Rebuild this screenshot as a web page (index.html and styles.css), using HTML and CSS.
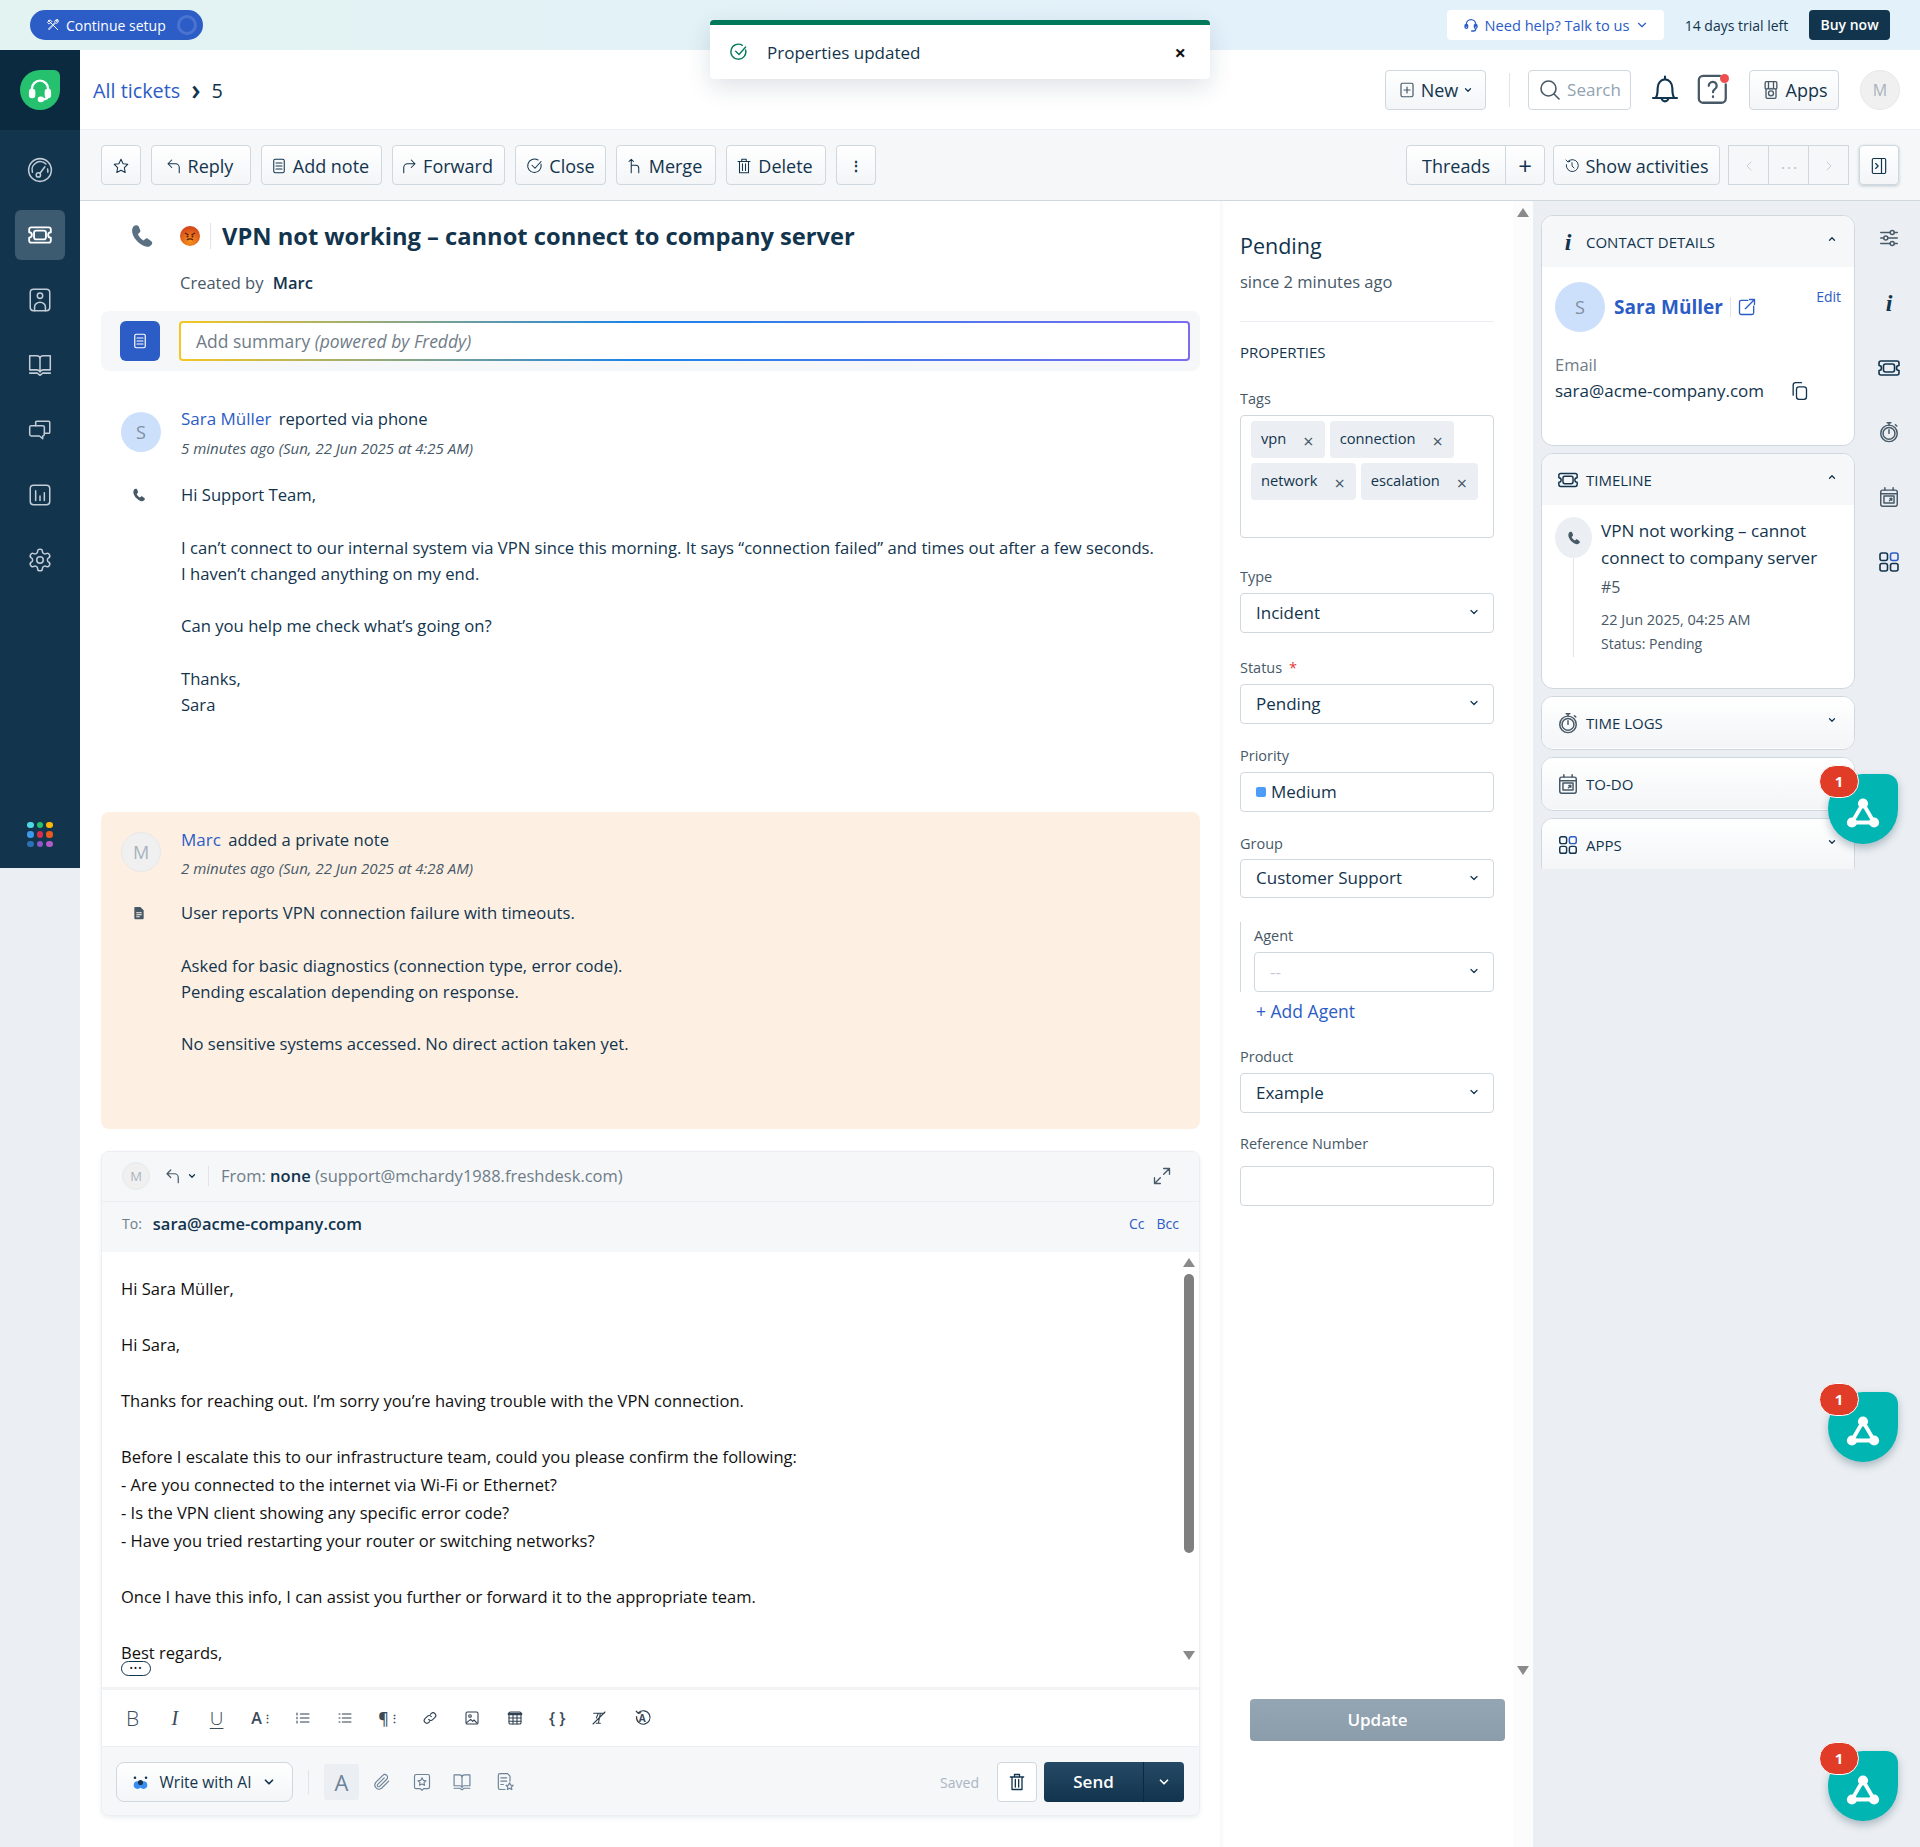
FILE: index.html
```html
<!DOCTYPE html>
<html lang="en">
<head>
    <meta charset="UTF-8">
    <meta name="viewport" content="width=device-width, initial-scale=1.0">
    <title>VPN not working - cannot connect to company server</title>
    <link rel="stylesheet" href="styles.css">
</head>
<body>
    <svg class="sprite" xmlns="http://www.w3.org/2000/svg">
        <symbol id="i-gauge" viewBox="0 0 24 24"><circle cx="12" cy="12" r="10.500"/><path d="M5 14a7.500 7.500 0 0 1 12.500-7.500M19 11a7 7 0 0 1 .2 3M12 15l4.500-6"/><circle cx="10.500" cy="16.500" r="2"/></symbol>
        <symbol id="i-ticket" viewBox="0 0 24 24"><path d="M2 7a2 2 0 0 1 2-2h16a2 2 0 0 1 2 2v2.5a2.5 2.5 0 0 0 0 5V17a2 2 0 0 1-2 2H4a2 2 0 0 1-2-2v-2.500a2.500 2.500 0 0 0 0-5z"/><rect x="6.500" y="8" width="11" height="8" rx="2"/></symbol>
        <symbol id="i-contact" viewBox="0 0 24 24"><rect x="3" y="2" width="18" height="20" rx="3"/><circle cx="12" cy="8" r="2.500"/><path d="M7 22v-3.500a5 4.500 0 0 1 10 0V22"/></symbol>
        <symbol id="i-book" viewBox="0 0 24 24"><path d="M2.500 3.500H9a3 3 0 0 1 3 3v12a3 3 0 0 0-3-2H2.500zM21.500 3.500H15a3 3 0 0 0-3 3v12a3 3 0 0 1 3-2h6.500zM2.500 19.500H9.500L12 21.500l2.500-2h7"/></symbol>
        <symbol id="i-chat" viewBox="0 0 24 24"><path d="M8 8V5a1 1 0 0 1 1-1h11a1 1 0 0 1 1 1v9a1 1 0 0 1-1 1h-4"/><path d="M4 8h10.500a1.500 1.500 0 0 1 1.500 1.500V16a1.500 1.500 0 0 1-1.500 1.500V20l-3-2.500H4A1.500 1.500 0 0 1 2.500 16V9.500A1.500 1.500 0 0 1 4 8z"/></symbol>
        <symbol id="i-chart" viewBox="0 0 24 24"><rect x="3" y="3" width="18" height="18" rx="3"/><path d="M8 8v9M12 13v4M16 10v7"/></symbol>
        <symbol id="i-gear" viewBox="0 0 24 24"><path d="M12.220 2h-.44a2 2 0 0 0-2 2v.18a2 2 0 0 1-1 1.730l-.43.25a2 2 0 0 1-2 0l-.15-.08a2 2 0 0 0-2.730.73l-.22.38a2 2 0 0 0 .73 2.730l.15.1a2 2 0 0 1 1 1.720v.51a2 2 0 0 1-1 1.740l-.15.09a2 2 0 0 0-.73 2.730l.22.38a2 2 0 0 0 2.730.73l.15-.08a2 2 0 0 1 2 0l.43.25a2 2 0 0 1 1 1.730V20a2 2 0 0 0 2 2h.44a2 2 0 0 0 2-2v-.18a2 2 0 0 1 1-1.730l.43-.25a2 2 0 0 1 2 0l.15.08a2 2 0 0 0 2.730-.73l.22-.39a2 2 0 0 0-.73-2.730l-.15-.08a2 2 0 0 1-1-1.740v-.5a2 2 0 0 1 1-1.740l.15-.09a2 2 0 0 0 .73-2.730l-.22-.38a2 2 0 0 0-2.730-.73l-.15.08a2 2 0 0 1-2 0l-.43-.25a2 2 0 0 1-1-1.730V4a2 2 0 0 0-2-2z"/><circle cx="12" cy="12" r="3"/></symbol>
        <symbol id="i-star" viewBox="0 0 24 24"><path d="M12 3l2.800 5.900 6.200.9-4.500 4.500 1.100 6.400-5.600-3-5.600 3 1.100-6.400L3 9.800l6.200-.9z"/></symbol>
        <symbol id="i-reply" viewBox="0 0 24 24"><path d="M9 4L4 9l5 5M4 9h10a5 5 0 0 1 5 5v7"/></symbol>
        <symbol id="i-forward" viewBox="0 0 24 24"><path d="M15 4l5 5-5 5M20 9H10a5 5 0 0 0-5 5v7"/></symbol>
        <symbol id="i-note" viewBox="0 0 24 24"><rect x="5" y="3" width="14" height="18" rx="2"/><path d="M8 8h8M8 12h8M8 16h8"/></symbol>
        <symbol id="i-check" viewBox="0 0 24 24"><path d="M20 9.500A9 9 0 1 1 16 4"/><path d="M8 11l4 4 8-9"/></symbol>
        <symbol id="i-merge" viewBox="0 0 24 24"><path d="M7 3v18M4 6l3-3 3 3M7 11h6a4 4 0 0 1 4 4v6"/></symbol>
        <symbol id="i-trash" viewBox="0 0 24 24"><path d="M4 6h16M9 6V3h6v3M6 6v15h12V6M10 9v9M14 9v9"/></symbol>
        <symbol id="i-plus-box" viewBox="0 0 24 24"><rect x="4" y="3" width="16" height="18" rx="2"/><path d="M8 12h8M12 8v8"/></symbol>
        <symbol id="i-chevron" viewBox="0 0 24 24"><path d="M6 9l6 6 6-6"/></symbol>
        <symbol id="i-search" viewBox="0 0 24 24"><circle cx="10.500" cy="10.500" r="7.500"/><path d="M16 16l5 5"/></symbol>
        <symbol id="i-bell" viewBox="0 0 24 24"><path d="M12 2v2M5 18c1.500-2 1.500-4 1.500-7.500C6.500 7 9 4 12 4s5.500 3 5.500 6.500c0 3.500 0 5.500 1.500 7.500zM3 18h18M9.500 18a2.500 2.500 0 0 0 5 0"/></symbol>
        <symbol id="i-bubble-q" viewBox="0 0 24 24"><path d="M17 2H5a3 3 0 0 0-3 3v13a3 3 0 0 0 3 3h13a3 3 0 0 0 3-3V8"/><path d="M9 9a2.800 2.800 0 1 1 4.300 2.400c-.9.6-1.300 1.100-1.300 2.100M12 16.500v.5"/></symbol>
        <symbol id="i-store" viewBox="0 0 24 24"><path d="M5 10V3.500A1.500 1.500 0 0 1 6.500 2h11A1.500 1.500 0 0 1 19 3.500V10a2.300 2.300 0 0 1-3.500 0 2.300 2.300 0 0 1-3.500 0 2.300 2.300 0 0 1-3.500 0A2.300 2.300 0 0 1 5 10zM6 11v9.500A1.500 1.500 0 0 0 7.500 22h9a1.500 1.500 0 0 0 1.500-1.500V11M9 2v8M15 2v8"/><circle cx="12" cy="16" r="3"/></symbol>
        <symbol id="i-history" viewBox="0 0 24 24"><path d="M6 5a9 9 0 1 1-2.500 5M3 3l3 3 3-1M12 7v5l3 3"/></symbol>
        <symbol id="i-panel" viewBox="0 0 24 24"><rect x="4" y="3" width="16" height="18" rx="1.500"/><path d="M15 3v18M8 9l3 3-3 3"/></symbol>
        <symbol id="i-sliders" viewBox="0 0 24 24"><path d="M3 6h10M18 6h3M3 12h3M11 12h10M3 18h10M18 18h3"/><circle cx="15.500" cy="6" r="2.200"/><circle cx="8.500" cy="12" r="2.200"/><circle cx="15.500" cy="18" r="2.200"/></symbol>
        <symbol id="i-external" viewBox="0 0 24 24"><path d="M13 4H5a2 2 0 0 0-2 2v13a2 2 0 0 0 2 2h13a2 2 0 0 0 2-2v-8M10 14L21 3M15 3h6v6"/></symbol>
        <symbol id="i-copy" viewBox="0 0 24 24"><rect x="9" y="7" width="12" height="15" rx="3"/><path d="M5 17V5a3 3 0 0 1 3-3h7"/></symbol>
        <symbol id="i-timer" viewBox="0 0 24 24"><circle cx="12" cy="13.500" r="9"/><circle cx="12" cy="13.500" r="6.500"/><path d="M12 9.500v4M10 2h4M12 2v2.500M19 4l1.500 1.500"/></symbol>
        <symbol id="i-calendar" viewBox="0 0 24 24"><rect x="3" y="4.500" width="18" height="17.500" rx="2"/><path d="M7.500 2v2.500M16.500 2v2.500M3 8.500h18"/><rect x="6.500" y="11" width="11" height="7.500"/><path d="M12.500 16l2.500-2.500M13 13.500h2v2"/></symbol>
        <symbol id="i-grid" viewBox="0 0 24 24"><rect x="3" y="3" width="7.500" height="7.500" rx="2"/><rect x="13.500" y="3" width="7.500" height="7.500" rx="2" class="tile-blue"/><rect x="3" y="13.500" width="7.500" height="7.500" rx="2"/><rect x="13.500" y="13.500" width="7.500" height="7.500" rx="2"/></symbol>
        <symbol id="i-phone" viewBox="0 0 24 24"><path class="solid" d="M5 3.500C6 2.600 8 2.400 9 3.500l1.500 3.500c.3.8 0 1.600-.6 2.100L8.500 10.500c.8 2 2.700 4.200 4.800 5.300l1.500-1.300c.7-.6 1.500-.6 2.200-.2l3 2.200c.9.7 1.100 2 .2 3-1 1.200-2.400 2-4 1.700C9.500 20 3.500 13 3.500 7.500c0-1.500.6-3 1.500-4z"/></symbol>
        <symbol id="i-doc" viewBox="0 0 24 24"><path class="solid" d="M6 3h8l5 5v12a1.500 1.500 0 0 1-1.500 1.500h-11A1.500 1.500 0 0 1 5 20V4.500A1.500 1.500 0 0 1 6 3z"/><path class="cut" d="M8.500 11.500h7M8.500 14.500h7M8.500 17.500h4"/></symbol>
        <symbol id="i-link" viewBox="0 0 24 24"><path d="M10 14a4 4 0 0 0 6 .5l3.500-3.500a4 4 0 0 0-5.700-5.700l-1.300 1.300M14 10a4 4 0 0 0-6-.5L4.500 13a4 4 0 0 0 5.700 5.700l1.300-1.300"/></symbol>
        <symbol id="i-image" viewBox="0 0 24 24"><rect x="3" y="3" width="18" height="18" rx="2"/><circle cx="9" cy="9" r="2"/><path d="M4 19l6-5 3 3 2-2 5 5"/></symbol>
        <symbol id="i-table" viewBox="0 0 24 24"><rect x="3" y="3" width="18" height="18" rx="2"/><path class="bar" d="M3 6h18"/><path d="M3 12h18M3 17h18M9 8v13M15 8v13"/></symbol>
        <symbol id="i-ol" viewBox="0 0 24 24"><path d="M8 6h13M8 12h13M8 18h13M3 4.500v3M3 11v2M3 16.500v3"/></symbol>
        <symbol id="i-ul" viewBox="0 0 24 24"><path d="M8 6h13M8 12h13M8 18h13M3 6h1.500M3 12h1.500M3 18h1.500"/></symbol>
        <symbol id="i-clear" viewBox="0 0 24 24"><path d="M4 5h16M14 5l-3 15M11 5L8 12M3 21L21 3M8 20h6"/></symbol>
        <symbol id="i-clip" viewBox="0 0 24 24"><path d="M20 11l-8.500 8.500a5 5 0 0 1-7-7L13 4a3.300 3.300 0 0 1 4.700 4.700l-8.500 8.500a1.600 1.600 0 0 1-2.300-2.300l7.800-7.800"/></symbol>
        <symbol id="i-canned" viewBox="0 0 24 24"><path d="M5 3h14a2 2 0 0 1 2 2v13a2 2 0 0 1-2 2h-5l-2 2-2-2H5a2 2 0 0 1-2-2V5a2 2 0 0 1 2-2z"/><path d="M12 7l1.500 3 3.300.5-2.400 2.300.6 3.200-3-1.500-3 1.500.6-3.200-2.400-2.300 3.300-.5z"/></symbol>
        <symbol id="i-form" viewBox="0 0 24 24"><path d="M12 21H6a2 2 0 0 1-2-2V4a2 2 0 0 1 2-2h9l3 3v6M7 7h7M7 11h7M7 15h3"/><path d="M17.500 13l1.300 2.700 3 .4-2.200 2 .6 3-2.700-1.500-2.700 1.500.6-3-2.200-2 3-.4z"/></symbol>
        <symbol id="i-network" viewBox="0 0 24 24"><path class="net" d="M12 6L5 18h14z"/><circle class="solid" cx="12" cy="6" r="3.200"/><circle class="solid" cx="5" cy="18" r="3.200"/><circle class="solid" cx="19" cy="18" r="3.200"/></symbol>
    </svg>

    <div class="topbar">
        <a class="setup-pill">
            <svg class="ico ico-14" viewBox="0 0 24 24"><path d="M4 4l16 16M3 7l4-4 3 3-4 4zM20 3a4 4 0 0 0-5 5L4 19l1 1L16 9a4 4 0 0 0 5-5l-2.500 2.500L17 5z"/></svg>
            Continue setup
            <span class="setup-ring"></span>
        </a>
        <div class="topbar-right">
            <a class="help-link">
                <svg class="ico ico-16" viewBox="0 0 24 24"><path d="M5 14v-3a7 7 0 0 1 14 0v3M5 11a2 2 0 0 0-2 2v2a2 2 0 0 0 4 0v-2a2 2 0 0 0-2-2zM19 11a2 2 0 0 1 2 2v2a2 2 0 0 1-4 0v-2a2 2 0 0 1 2-2zM19 17v1a3 3 0 0 1-3 3h-3"/></svg>
                Need help? Talk to us
                <svg class="ico ico-14"><use href="#i-chevron"/></svg>
            </a>
            <span class="trial">14 days trial left</span>
            <a class="buy-btn">Buy now</a>
        </div>
    </div>

    <div class="app">
        <nav class="nav">
            <div class="nav-logo">
                <div class="logo-mark">
                    <svg class="ico logo-head" viewBox="0 0 24 24"><path d="M5 15v-4a7 7 0 0 1 14 0v4M19 16c0 3-2 4-5 4"/><rect x="3.500" y="12" width="3.500" height="6" rx="1.500" class="logo-ear"/><rect x="17" y="12" width="3.500" height="6" rx="1.500" class="logo-ear"/><rect x="11" y="18.500" width="3.500" height="3" rx="1.500" class="logo-ear"/></svg>
                </div>
            </div>
            <ul class="nav-list">
                <li class="nav-item"><svg class="ico ico-26"><use href="#i-gauge"/></svg></li>
                <li class="nav-item is-active"><svg class="ico ico-26"><use href="#i-ticket"/></svg></li>
                <li class="nav-item"><svg class="ico ico-26"><use href="#i-contact"/></svg></li>
                <li class="nav-item"><svg class="ico ico-26"><use href="#i-book"/></svg></li>
                <li class="nav-item"><svg class="ico ico-26"><use href="#i-chat"/></svg></li>
                <li class="nav-item"><svg class="ico ico-26"><use href="#i-chart"/></svg></li>
                <li class="nav-item"><svg class="ico ico-26"><use href="#i-gear"/></svg></li>
            </ul>
            <div class="nav-dots">
                <i class="dot d1"></i><i class="dot d2"></i><i class="dot d3"></i>
                <i class="dot d4"></i><i class="dot d5"></i><i class="dot d6"></i>
                <i class="dot d7"></i><i class="dot d8"></i><i class="dot d9"></i>
            </div>
        </nav>

        <div class="content">
            <header class="header">
                <div class="crumbs"><a class="link">All tickets</a><span class="crumb-sep">&rsaquo;</span><span>5</span></div>
                <div class="header-tools">
                    <a class="btn btn-new"><svg class="ico ico-18"><use href="#i-plus-box"/></svg>New<svg class="ico ico-10 ico-bold"><use href="#i-chevron"/></svg></a>
                    <span class="v-rule"></span>
                    <a class="btn btn-search"><svg class="ico ico-24"><use href="#i-search"/></svg><span class="muted">Search</span></a>
                    <svg class="ico tool-bell"><use href="#i-bell"/></svg>
                    <span class="help-wrap"><svg class="ico help-q"><use href="#i-bubble-q"/></svg><i class="red-dot"></i></span>
                    <a class="btn btn-apps"><svg class="ico ico-20"><use href="#i-store"/></svg>Apps</a>
                    <span class="avatar avatar-grey">M</span>
                </div>
            </header>

            <div class="toolbar">
                <a class="btn btn-icon"><svg class="ico ico-18"><use href="#i-star"/></svg></a>
                <a class="btn btn-w100 btn-left"><svg class="ico ico-18"><use href="#i-reply"/></svg>Reply</a>
                <a class="btn btn-w121 btn-left"><svg class="ico ico-18"><use href="#i-note"/></svg>Add note</a>
                <a class="btn btn-w113 btn-left"><svg class="ico ico-18"><use href="#i-forward"/></svg>Forward</a>
                <a class="btn btn-w91"><svg class="ico ico-18"><use href="#i-check"/></svg>Close</a>
                <a class="btn btn-w100 btn-left"><svg class="ico ico-18"><use href="#i-merge"/></svg>Merge</a>
                <a class="btn btn-w100 btn-left"><svg class="ico ico-18"><use href="#i-trash"/></svg>Delete</a>
                <a class="btn btn-icon kebab">&#8942;</a>
                <div class="toolbar-right">
                    <div class="btn-group threads-group">
                        <a class="btn btn-threads">Threads</a>
                        <a class="btn btn-plus">+</a>
                    </div>
                    <a class="btn btn-activities"><svg class="ico ico-16"><use href="#i-history"/></svg>Show activities</a>
                    <div class="btn-group pager">
                        <a class="btn btn-page"><svg class="ico ico-16 rot90"><use href="#i-chevron"/></svg></a>
                        <a class="btn btn-page">&#8943;</a>
                        <a class="btn btn-page"><svg class="ico ico-16 rot-90"><use href="#i-chevron"/></svg></a>
                    </div>
                    <a class="btn btn-icon btn-panel"><svg class="ico ico-20"><use href="#i-panel"/></svg></a>
                </div>
            </div>

            <div class="columns">
                <main class="ticket">
                    <div class="ticket-title">
                        <svg class="ico title-phone"><use href="#i-phone"/></svg>
                        <svg class="emoji" viewBox="0 0 20 20">
                            <defs><radialGradient id="angry" cx="50%" cy="75%" r="75%"><stop offset="0" stop-color="#f7941d"/><stop offset="1" stop-color="#d2401a"/></radialGradient></defs>
                            <circle cx="10" cy="10" r="10" fill="url(#angry)"/>
                            <path d="M5 7l3.500 2M15 7l-3.500 2M7 14c1.500-1.500 4.500-1.500 6 0" fill="none" stroke="#5b1c0a" stroke-width="1.400"/>
                            <circle cx="7.500" cy="10.500" r="1" fill="#5b1c0a"/><circle cx="12.500" cy="10.500" r="1" fill="#5b1c0a"/>
                        </svg>
                        <h1>VPN not working &ndash; cannot connect to company server</h1>
                    </div>
                    <div class="created">Created by <b>Marc</b></div>

                    <div class="summary">
                        <span class="summary-icon"><svg class="ico ico-18"><use href="#i-note"/></svg></span>
                        <div class="summary-input">Add summary <em>(powered by Freddy)</em></div>
                    </div>

                    <article class="msg msg-reply">
                        <span class="avatar avatar-blue">S</span>
                        <div class="msg-head">
                            <div><a class="link name">Sara M&uuml;ller</a> reported via phone</div>
                            <div class="meta">5 minutes ago (Sun, 22 Jun 2025 at 4:25 AM)</div>
                        </div>
                        <svg class="ico ico-16 msg-icon"><use href="#i-phone"/></svg>
                        <div class="msg-body">
                            <p>Hi Support Team,</p>
                            <br>
                            <p>I can&rsquo;t connect to our internal system via VPN since this morning. It says &ldquo;connection failed&rdquo; and times out after a few seconds.</p>
                            <p>I haven&rsquo;t changed anything on my end.</p>
                            <br>
                            <p>Can you help me check what&rsquo;s going on?</p>
                            <br>
                            <p>Thanks,</p>
                            <p>Sara</p>
                        </div>
                    </article>

                    <article class="msg msg-note">
                        <span class="avatar avatar-grey">M</span>
                        <div class="msg-head">
                            <div><a class="link name">Marc</a> added a private note</div>
                            <div class="meta">2 minutes ago (Sun, 22 Jun 2025 at 4:28 AM)</div>
                        </div>
                        <svg class="ico ico-16 msg-icon"><use href="#i-doc"/></svg>
                        <div class="msg-body">
                            <p>User reports VPN connection failure with timeouts.</p>
                            <br>
                            <p>Asked for basic diagnostics (connection type, error code).</p>
                            <p>Pending escalation depending on response.</p>
                            <br>
                            <p>No sensitive systems accessed. No direct action taken yet.</p>
                        </div>
                    </article>

                    <section class="composer">
                        <div class="composer-from">
                            <span class="avatar avatar-grey avatar-sm">M</span>
                            <svg class="ico ico-18"><use href="#i-reply"/></svg>
                            <svg class="ico ico-10 ico-bold"><use href="#i-chevron"/></svg>
                            <span class="v-rule v-rule-sm"></span>
                            <span class="from-text">From: <b>none</b> (support@mchardy1988.freshdesk.com)</span>
                            <svg class="ico ico-20 expand" viewBox="0 0 24 24"><path d="M14 3h7v7M21 3l-7 7M10 21H3v-7M3 21l7-7"/></svg>
                        </div>
                        <div class="composer-to">
                            <span class="to-label">To:</span>
                            <b>sara@acme-company.com</b>
                            <span class="cc"><a class="link">Cc</a><a class="link">Bcc</a></span>
                        </div>
                        <div class="editor">
                            <div class="editor-text">
                                <p>Hi Sara M&uuml;ller,</p>
                                <br>
                                <p>Hi Sara,</p>
                                <br>
                                <p>Thanks for reaching out. I&rsquo;m sorry you&rsquo;re having trouble with the VPN connection.</p>
                                <br>
                                <p>Before I escalate this to our infrastructure team, could you please confirm the following:</p>
                                <p>- Are you connected to the internet via Wi-Fi or Ethernet?</p>
                                <p>- Is the VPN client showing any specific error code?</p>
                                <p>- Have you tried restarting your router or switching networks?</p>
                                <br>
                                <p>Once I have this info, I can assist you further or forward it to the appropriate team.</p>
                                <br>
                                <p>Best regards,</p>
                                <span class="quote-toggle">&bull;&bull;&bull;</span>
                            </div>
                            <div class="scrollbar">
                                <i class="arrow-up"></i>
                                <i class="thumb"></i>
                                <i class="arrow-down"></i>
                            </div>
                        </div>
                        <div class="format-bar">
                            <span class="fmt fmt-b">B</span>
                            <span class="fmt fmt-i">I</span>
                            <span class="fmt fmt-u">U</span>
                            <span class="fmt fmt-size">A<small>&#8942;</small></span>
                            <span class="fmt"><svg class="ico ico-16"><use href="#i-ol"/></svg></span>
                            <span class="fmt"><svg class="ico ico-16"><use href="#i-ul"/></svg></span>
                            <span class="fmt fmt-size">&para;<small>&#8942;</small></span>
                            <span class="fmt"><svg class="ico ico-16"><use href="#i-link"/></svg></span>
                            <span class="fmt"><svg class="ico ico-16"><use href="#i-image"/></svg></span>
                            <span class="fmt"><svg class="ico ico-16"><use href="#i-table"/></svg></span>
                            <span class="fmt fmt-code">{ }</span>
                            <span class="fmt"><svg class="ico ico-16"><use href="#i-clear"/></svg></span>
                            <span class="fmt fmt-undo"><svg class="ico ico-18" viewBox="0 0 24 24"><path d="M6 5a9 9 0 1 1-2.500 5M3 3l3 3 3-1"/></svg><i>A</i></span>
                        </div>
                        <div class="composer-foot">
                            <a class="btn btn-ai">
                                <svg class="freddy" viewBox="0 0 20 20"><circle cx="6.500" cy="13" r="4.500" class="fr-a"/><circle cx="13.500" cy="13" r="4.500" class="fr-a"/><circle cx="10" cy="10" r="3" class="fr-b"/><circle cx="3.500" cy="4.500" r="1.500" class="fr-b"/><circle cx="16.500" cy="4.500" r="1.500" class="fr-b"/></svg>
                                Write with AI
                                <svg class="ico ico-14 ico-bold"><use href="#i-chevron"/></svg>
                            </a>
                            <span class="v-rule v-rule-foot"></span>
                            <span class="foot-tool is-on"><i>A</i></span>
                            <span class="foot-tool"><svg class="ico ico-20"><use href="#i-clip"/></svg></span>
                            <span class="foot-tool"><svg class="ico ico-20"><use href="#i-canned"/></svg></span>
                            <span class="foot-tool"><svg class="ico ico-20"><use href="#i-book"/></svg></span>
                            <span class="foot-tool foot-form"><svg class="ico ico-20"><use href="#i-form"/></svg></span>
                            <div class="foot-right">
                                <span class="saved">Saved</span>
                                <a class="btn btn-bin"><svg class="ico ico-20 ico-dark"><use href="#i-trash"/></svg></a>
                                <div class="send-group">
                                    <a class="send">Send</a>
                                    <a class="send-more"><svg class="ico ico-14 ico-bold"><use href="#i-chevron"/></svg></a>
                                </div>
                            </div>
                        </div>
                    </section>
                </main>

                <aside class="props">
                    <div class="props-main">
                        <div class="props-status">Pending</div>
                        <div class="props-since">since 2 minutes ago</div>
                        <div class="props-title">PROPERTIES</div>

                        <label class="field-label label-tags">Tags</label>
                        <div class="tags">
                            <span class="tag">vpn<i>&times;</i></span>
                            <span class="tag">connection<i>&times;</i></span>
                            <span class="tag">network<i>&times;</i></span>
                            <span class="tag">escalation<i>&times;</i></span>
                        </div>

                        <label class="field-label label-type">Type</label>
                        <div class="select">Incident<svg class="ico ico-12"><use href="#i-chevron"/></svg></div>

                        <label class="field-label label-status">Status <span class="req">*</span></label>
                        <div class="select">Pending<svg class="ico ico-12"><use href="#i-chevron"/></svg></div>

                        <label class="field-label">Priority</label>
                        <div class="select"><span class="prio"><i></i>Medium</span></div>

                        <label class="field-label">Group</label>
                        <div class="select select-tight">Customer Support<svg class="ico ico-12"><use href="#i-chevron"/></svg></div>

                        <div class="agent-block">
                            <label class="field-label">Agent</label>
                            <div class="select select-empty">--<svg class="ico ico-12"><use href="#i-chevron"/></svg></div>
                        </div>
                        <a class="link add-agent">+ Add Agent</a>

                        <label class="field-label label-product">Product</label>
                        <div class="select">Example<svg class="ico ico-12"><use href="#i-chevron"/></svg></div>

                        <label class="field-label label-ref">Reference Number</label>
                        <div class="select"></div>

                        <a class="update-btn">Update</a>
                    </div>
                    <div class="props-scroll"><i class="arrow-up"></i><i class="arrow-down"></i></div>
                </aside>

                <div class="side">
                    <div class="panels">
                        <section class="panel panel-contact">
                            <div class="panel-head">
                                <span class="italic-i">i</span>CONTACT DETAILS
                                <svg class="ico ico-10 ico-bold chev-up"><use href="#i-chevron"/></svg>
                            </div>
                            <div class="contact-body">
                                <div class="contact-row">
                                    <span class="avatar avatar-blue avatar-lg">S</span>
                                    <a class="link contact-name">Sara M&uuml;ller</a>
                                    <span class="v-rule v-rule-xs"></span>
                                    <svg class="ico ico-20 ico-blue"><use href="#i-external"/></svg>
                                    <a class="link edit">Edit</a>
                                </div>
                                <div class="email-label">Email</div>
                                <div class="email-row"><span>sara@acme-company.com</span><svg class="ico ico-20 ico-dark"><use href="#i-copy"/></svg></div>
                            </div>
                        </section>

                        <section class="panel panel-timeline">
                            <div class="panel-head">
                                <svg class="ico ico-22 ico-dark"><use href="#i-ticket"/></svg>TIMELINE
                                <svg class="ico ico-10 ico-bold chev-up"><use href="#i-chevron"/></svg>
                            </div>
                            <div class="timeline">
                                <div class="tl-rail"><span class="tl-dot"><svg class="ico ico-16"><use href="#i-phone"/></svg></span><i class="tl-line"></i></div>
                                <div class="tl-text">
                                    <div class="tl-title">VPN not working &ndash; cannot connect to company server</div>
                                    <div class="tl-num">#5</div>
                                    <div class="tl-date">22 Jun 2025, 04:25 AM</div>
                                    <div class="tl-status">Status: Pending</div>
                                </div>
                            </div>
                        </section>

                        <section class="panel panel-closed">
                            <div class="panel-head"><svg class="ico ico-22"><use href="#i-timer"/></svg>TIME LOGS<svg class="ico ico-10 ico-bold chev-up chev-down"><use href="#i-chevron"/></svg></div>
                        </section>
                        <section class="panel panel-closed">
                            <div class="panel-head"><svg class="ico ico-22"><use href="#i-calendar"/></svg>TO-DO<svg class="ico ico-10 ico-bold chev-up chev-down"><use href="#i-chevron"/></svg></div>
                        </section>
                        <section class="panel panel-closed">
                            <div class="panel-head"><svg class="ico ico-22 ico-dark"><use href="#i-grid"/></svg>APPS<svg class="ico ico-10 ico-bold chev-up chev-down"><use href="#i-chevron"/></svg></div>
                        </section>
                    </div>
                    <div class="rail">
                        <svg class="ico ico-22"><use href="#i-sliders"/></svg>
                        <span class="italic-i">i</span>
                        <svg class="ico ico-24 ico-dark"><use href="#i-ticket"/></svg>
                        <svg class="ico ico-22"><use href="#i-timer"/></svg>
                        <svg class="ico ico-22"><use href="#i-calendar"/></svg>
                        <svg class="ico ico-24 ico-dark"><use href="#i-grid"/></svg>
                    </div>
                </div>
            </div>
        </div>
    </div>

    <div class="toast">
        <svg class="ico ico-20 toast-check"><use href="#i-check"/></svg>
        <span>Properties updated</span>
        <b class="toast-close">&times;</b>
    </div>

    <div class="bubble bubble-one"><span class="bubble-badge">1</span><svg class="ico bubble-net"><use href="#i-network"/></svg></div>
    <div class="bubble bubble-two"><span class="bubble-badge">1</span><svg class="ico bubble-net"><use href="#i-network"/></svg></div>
    <div class="bubble bubble-three"><span class="bubble-badge">1</span><svg class="ico bubble-net"><use href="#i-network"/></svg></div>
</body>
</html>
```

FILE: styles.css
```css
* {
    box-sizing: border-box;
}
html, body {
    margin: 0;
    height: 1847px;
    overflow: hidden;
}
body {
    position: relative;
    font-family: "Open Sans", "Noto Sans", sans-serif;
    font-size: 15px;
    color: #12344d;
    background-color: #ebeff3;
}
p {
    margin: 0;
}
.sprite {
    display: none;
}
.ico {
    fill: none;
    stroke: currentColor;
    stroke-width: 1.6;
    stroke-linecap: round;
    stroke-linejoin: round;
    flex: none;
    color: #475867;
}
.ico .solid, .solid {
    fill: currentColor;
    stroke: none;
}
.ico-10 { width: 10px; height: 10px; }
.ico-12 { width: 12px; height: 12px; }
.ico-14 { width: 14px; height: 14px; }
.ico-16 { width: 16px; height: 16px; }
.ico-18 { width: 18px; height: 18px; }
.ico-20 { width: 20px; height: 20px; }
.ico-22 { width: 22px; height: 22px; }
.ico-24 { width: 24px; height: 24px; }
.ico-26 { width: 26px; height: 26px; }
.ico-bold { stroke-width: 3; color: #12344d; }
.ico-dark { color: #12344d; }
.ico-blue { color: #2c5cc5; }
.rot90 { transform: rotate(90deg); }
.rot-90 { transform: rotate(-90deg); }
.bar { stroke-width: 4; }
.cut { stroke: #fdf0e3; }
.net { stroke-width: 2.400; }
.link {
    color: #2c5cc5;
    text-decoration: none;
}
.muted {
    color: #92a2b1;
}

/* top strip */
.topbar {
    height: 50px;
    display: flex;
    align-items: center;
    padding: 0 30px;
    background: linear-gradient(90deg, #e2f3f1, #e3f1fa 60%);
}
.setup-pill {
    width: 173px;
    height: 30px;
    display: flex;
    align-items: center;
    gap: 6px;
    padding-left: 16px;
    border-radius: 15px;
    font-size: 14px;
    color: #fff;
    background-color: #2c5cc5;
}
.setup-pill .ico {
    color: #fff;
}
.setup-ring {
    width: 20px;
    height: 20px;
    margin-left: 5px;
    border: 3px solid #4a74d0;
    border-radius: 50%;
}
.topbar-right {
    margin-left: auto;
    display: flex;
    align-items: center;
}
.help-link {
    width: 217px;
    height: 30px;
    display: flex;
    align-items: center;
    justify-content: center;
    gap: 6px;
    padding-left: 1px;
    border-radius: 4px;
    font-size: 14.600px;
    color: #2c5cc5;
    background-color: #fff;
}
.help-link .ico {
    color: #2c5cc5;
    stroke-width: 2;
}
.trial {
    width: 145px;
    text-align: center;
    font-size: 14px;
}
.buy-btn {
    width: 81px;
    height: 30px;
    line-height: 30px;
    text-align: center;
    font-size: 14px;
    font-weight: 600;
    border-radius: 4px;
    color: #fff;
    background-color: #12344d;
}

/* left nav */
.app {
    display: flex;
    align-items: flex-start;
}
.nav {
    width: 80px;
    height: 818px;
    flex: none;
    display: flex;
    flex-direction: column;
    align-items: center;
    background-color: #12344d;
}
.nav-logo {
    width: 100%;
    height: 80px;
    padding: 20px;
    background-color: #0c2a3f;
}
.logo-mark {
    width: 40px;
    height: 40px;
    display: flex;
    align-items: center;
    justify-content: center;
    border-radius: 50% 6px 50% 50%;
    background-color: #25c16f;
}
.logo-head {
    width: 28px;
    height: 28px;
    color: #fff;
    stroke-width: 2;
}
.logo-ear {
    fill: #fff;
}
.nav-list {
    list-style: none;
    margin: 15px 0 0;
    padding: 0;
}
.nav-item {
    width: 50px;
    height: 50px;
    margin-bottom: 15px;
    display: flex;
    align-items: center;
    justify-content: center;
    border-radius: 6px;
}
.nav-item .ico {
    color: #c1ccd6;
    stroke-width: 1.400;
}
.nav-item.is-active {
    background-color: #3c5a70;
}
.nav-item.is-active .ico {
    color: #fff;
    stroke-width: 1.700;
}
.nav-dots {
    margin-top: auto;
    margin-bottom: 21px;
    display: grid;
    grid-template-columns: repeat(3, 6.500px);
    gap: 3px;
}
.dot {
    width: 6.500px;
    height: 6.500px;
    border-radius: 50%;
}
.d1 { background-color: #4fd9e6; }
.d2 { background-color: #25c16f; }
.d3 { background-color: #ffb600; }
.d4 { background-color: #3d9be9; }
.d5 { background-color: #d72d4e; }
.d6 { background-color: #ea5a1d; }
.d7 { background-color: #2a72b5; }
.d8 { background-color: #9055c8; }
.d9 { background-color: #b25ac6; }

.content {
    flex: 1;
    min-width: 0;
}
.header {
    height: 80px;
    display: flex;
    align-items: center;
    padding: 0 20px 0 13px;
    background-color: #fff;
    border-bottom: 1px solid #ebeff3;
}
.crumbs {
    display: flex;
    align-items: center;
    gap: 11px;
    padding-top: 1px;
    font-size: 19.800px;
    font-weight: 500;
}
.crumb-sep {
    font-size: 28px;
    line-height: 20px;
    margin-top: -3px;
    font-weight: 600;
}
.header-tools {
    margin-left: auto;
    display: flex;
    align-items: center;
}
.btn {
    height: 40px;
    display: inline-flex;
    align-items: center;
    justify-content: center;
    gap: 5px;
    padding: 0 14px;
    font-size: 18px;
    font-weight: 500;
    color: #12344d;
    border: 1px solid #cfd7df;
    border-radius: 4px;
    background: linear-gradient(180deg, #fff, #f3f5f7);
}
.btn-new {
    width: 101px;
    padding: 0;
}
.v-rule {
    width: 1px;
    height: 34px;
    margin: 0 18px 0 23px;
    background-color: #dfe5ea;
}
.btn-search {
    width: 103px;
    padding: 0;
    font-size: 17px;
    font-weight: 400;
    background: #fff;
}
.tool-bell {
    width: 32px;
    height: 32px;
    margin-left: 18px;
    color: #12344d;
}
.help-wrap {
    position: relative;
    display: flex;
    margin-left: 15px;
}
.help-q {
    width: 34px;
    height: 34px;
}
.red-dot {
    position: absolute;
    top: 1px;
    right: 1px;
    width: 9px;
    height: 9px;
    border-radius: 50%;
    background-color: #f04e4e;
}
.btn-apps {
    width: 90px;
    margin-left: 19px;
    padding: 0;
}
.avatar {
    width: 40px;
    height: 40px;
    flex: none;
    display: flex;
    align-items: center;
    justify-content: center;
    border-radius: 50%;
    font-size: 16px;
    font-weight: 500;
}
.avatar-grey {
    color: #a8b3bd;
    background-color: #f0f0f0;
    border: 1px solid #e8e8e8;
}
.avatar-blue {
    color: #7d8fa1;
    background-color: #cde0fb;
}
.header-tools .avatar {
    margin-left: 21px;
}

/* action bar */
.toolbar {
    height: 71px;
    display: flex;
    align-items: center;
    gap: 10px;
    padding: 0 21px;
    background-color: #f5f7f9;
    border-bottom: 1px solid #cfd7df;
}
.toolbar .btn {
    padding-top: 1px;
}
.btn-icon {
    width: 40px;
    padding: 0;
}
.btn-w91 { width: 91px; padding: 0; }
.btn-w100 { width: 100px; padding: 0; }
.btn-w113 { width: 113px; padding: 0; }
.btn-w121 { width: 121px; padding: 0; }
.toolbar .btn-left {
    padding-right: 4px;
}
.btn-activities {
    width: 167px;
    padding: 0;
}
.toolbar .btn .ico {
    color: #12344d;
    stroke-width: 1.400;
}
.kebab {
    font-size: 14px;
    font-weight: 700;
}
.toolbar-right {
    margin-left: auto;
    display: flex;
    align-items: center;
    gap: 9px;
}
.btn-group {
    display: flex;
}
.threads-group {
    margin-right: -1px;
}
.btn-threads {
    width: 100px;
    padding: 0;
    border-radius: 4px 0 0 4px;
}
.btn-plus {
    width: 40px;
    padding: 0;
    margin-left: -1px;
    font-size: 24px;
    font-weight: 500;
    border-radius: 0 4px 4px 0;
}
.btn-page {
    width: 41px;
    padding: 0;
    margin-left: -1px;
    border-radius: 0;
    color: #c1ccd6;
    background: #f5f7f9;
}
.toolbar .btn-page .ico {
    color: #c1ccd6;
}
.btn-panel {
    margin-left: 1px;
    box-shadow: 0 1px 3px rgba(18, 52, 77, .25);
}

.columns {
    display: flex;
    height: 1646px;
}

/* ticket thread */
.ticket {
    width: 1140px;
    flex: none;
    padding: 0 20px 0 21px;
    background-color: #fff;
}
.ticket-title {
    height: 72px;
    display: flex;
    align-items: center;
    padding-bottom: 2px;
}
.title-phone {
    width: 28px;
    height: 28px;
    margin-left: 27px;
    color: #5b7083;
}
.emoji {
    width: 20px;
    height: 20px;
    margin-left: 24px;
}
.ticket-title h1 {
    margin: 0 0 0 10px;
    padding-left: 11px;
    border-left: 1px solid #dfe5ea;
    font-size: 23.700px;
    line-height: 26px;
    font-weight: 700;
}
.created {
    height: 20px;
    line-height: 20px;
    padding-left: 79px;
    font-size: 16.500px;
    color: #475867;
}
.created b {
    margin-left: 5px;
    font-weight: 600;
    color: #12344d;
}
.summary {
    height: 60px;
    margin-top: 18px;
    display: flex;
    align-items: center;
    padding: 0 10px 0 19px;
    border-radius: 8px;
    background-color: #f5f7f9;
}
.summary-icon {
    width: 40px;
    height: 40px;
    display: flex;
    align-items: center;
    justify-content: center;
    border-radius: 6px;
    background-color: #2c5cc5;
}
.summary-icon .ico {
    color: #fff;
}
.summary-input {
    flex: 1;
    height: 40px;
    margin-left: 19px;
    padding-left: 15px;
    line-height: 36px;
    font-size: 17.500px;
    color: #6f7c87;
    border: 2px solid transparent;
    border-radius: 4px;
    background: linear-gradient(#fff, #fff) padding-box, linear-gradient(90deg, #f5c722, #1b84e8 45%, #7b6cf0) border-box;
}
.msg {
    display: grid;
    grid-template-columns: 40px 1fr;
    column-gap: 20px;
    align-content: start;
    align-items: start;
    padding: 20px;
    font-size: 16.650px;
}
.msg-reply {
    height: 420px;
    margin-top: 21px;
}
.msg-note {
    height: 317px;
    border-radius: 8px;
    background-color: #fdf0e3;
}
.msg .avatar {
    grid-row: 1;
    grid-column: 1;
    font-size: 18px;
}
.msg-head {
    grid-row: 1;
    grid-column: 2;
    margin-top: -6px;
    line-height: 26px;
}
.name {
    margin-right: 3px;
    font-size: 17px;
    font-weight: 500;
}
.meta {
    margin-top: 6px;
    line-height: 20px;
    font-size: 15px;
    font-style: italic;
    color: #475867;
}
.msg-icon {
    grid-row: 2;
    grid-column: 1;
    margin: 5px 0 0 10px;
}
.msg-body {
    grid-row: 2;
    grid-column: 2;
    line-height: 26.300px;
}
.msg-reply .msg-head {
    margin-bottom: 24px;
}
.msg-note .msg-head {
    margin-top: -5px;
    margin-bottom: 22px;
}
.msg-note .meta {
    margin-top: 5px;
}

/* reply box */
.composer {
    height: 665px;
    margin-top: 22px;
    border: 1px solid #ebeff3;
    border-radius: 8px;
    background-color: #fff;
    box-shadow: 0 2px 4px rgba(18, 52, 77, .08);
    overflow: hidden;
}
.composer-from {
    height: 50px;
    display: flex;
    align-items: center;
    gap: 5px;
    padding: 0 20px 2px;
    font-size: 16.500px;
    border-bottom: 1px solid #ebeff3;
    background-color: #f5f7f9;
}
.avatar-sm {
    width: 28px;
    height: 28px;
    margin-right: 9px;
    font-size: 13px;
}
.v-rule-sm {
    height: 20px;
    margin: 0 7px 0 6px;
}
.from-text {
    color: #6f7c87;
}
.from-text b {
    font-weight: 600;
    color: #12344d;
}
.expand {
    margin-left: auto;
    margin-right: 7px;
}
.composer-to {
    height: 50px;
    display: flex;
    align-items: center;
    padding: 0 20px 8px;
    font-size: 16.500px;
    background-color: #f5f7f9;
}
.to-label {
    margin-right: 11px;
    font-size: 14px;
    color: #6f7c87;
}
.composer-to b {
    font-weight: 600;
}
.cc {
    margin-left: auto;
    display: flex;
    gap: 12px;
    font-size: 14px;
    font-weight: 500;
}
.editor {
    height: 438px;
    display: flex;
    border-bottom: 3px solid #f1f3f5;
}
.editor-text {
    flex: 1;
    padding: 23px 0 0 19px;
    line-height: 28px;
    font-size: 16.550px;
    color: #111;
}
.quote-toggle {
    display: block;
    width: 30px;
    height: 15px;
    margin-top: -6px;
    text-align: center;
    line-height: 12px;
    font-size: 9px;
    letter-spacing: 1px;
    border: 1px solid #12344d;
    border-radius: 8px;
    background: #fff;
}
.scrollbar {
    width: 14px;
    margin: 6px 3px 27px 0;
    display: flex;
    flex-direction: column;
    align-items: center;
}
.arrow-up, .arrow-down {
    width: 0;
    height: 0;
    border-left: 6px solid transparent;
    border-right: 6px solid transparent;
}
.arrow-up {
    border-bottom: 9px solid #8a8a8a;
}
.arrow-down {
    margin-top: auto;
    border-top: 9px solid #8a8a8a;
}
.thumb {
    width: 10px;
    height: 279px;
    margin-top: 7px;
    border-radius: 5px;
    background-color: #7f7f7f;
}
.format-bar {
    height: 57px;
    display: flex;
    align-items: center;
    padding-left: 20px;
    border-bottom: 1px solid #ebeff3;
}
.fmt {
    width: 42.400px;
    height: 24px;
    display: flex;
    align-items: center;
    justify-content: flex-start;
    padding-left: 3px;
    font-size: 18px;
    color: #3a4a58;
}
.fmt .ico {
    color: #2f4050;
}
.fmt-b {
    padding-left: 4px;
    font-size: 21px;
    font-weight: 300;
}
.fmt-i {
    padding-left: 7px;
    font-family: "Liberation Serif", serif;
    font-style: italic;
    font-size: 20px;
}
.fmt-u {
    font-size: 19px;
    font-weight: 300;
    text-decoration: underline;
    text-underline-offset: 3px;
}
.fmt-size {
    padding-left: 2px;
    font-size: 16px;
    font-weight: 600;
}
.fmt-size small {
    font-size: 11px;
}
.fmt-code {
    font-size: 16px;
    font-weight: 600;
}
.fmt-undo {
    position: relative;
}
.fmt-undo i {
    position: absolute;
    left: 8px;
    top: 5px;
    font-style: normal;
    font-size: 10px;
    font-weight: 700;
}
.composer-foot {
    height: 70px;
    display: flex;
    align-items: center;
    padding: 0 15px 0 14px;
    background-color: #f5f7f9;
}
.btn-ai {
    width: 177px;
    justify-content: space-between;
    padding: 0 16px 0 15px;
    font-size: 15.500px;
    border-radius: 8px;
}
.freddy {
    width: 17px;
    height: 17px;
}
.fr-a { fill: #3b8cf2; }
.fr-b { fill: #12344d; }
.v-rule-foot {
    height: 24px;
    margin: 0 15px 0 15px;
}
.foot-tool {
    width: 35px;
    height: 36px;
    margin-right: 5px;
    display: flex;
    align-items: center;
    justify-content: center;
}
.foot-tool .ico {
    color: #6d8398;
    stroke-width: 1.400;
}
.foot-tool i {
    font-style: normal;
    font-size: 22px;
    color: #6d8398;
}
.foot-tool.is-on {
    border-radius: 3px;
    background-color: #ebeff3;
}
.foot-form {
    margin-left: 3px;
}
.foot-right {
    margin-left: auto;
    display: flex;
    align-items: center;
}
.saved {
    margin-right: 18px;
    font-size: 14px;
    color: #a8b6c4;
}
.btn-bin {
    width: 40px;
    padding: 0;
    background: #fff;
}
.send-group {
    display: flex;
    height: 40px;
    margin-left: 7px;
}
.send {
    width: 99px;
    line-height: 40px;
    text-align: center;
    font-size: 17px;
    font-weight: 600;
    color: #fff;
    border-radius: 4px 0 0 4px;
    background: linear-gradient(180deg, #264966, #12344d);
}
.send-more {
    width: 41px;
    display: flex;
    align-items: center;
    justify-content: center;
    border-left: 1px solid #0c2a3f;
    border-radius: 0 4px 4px 0;
    background: linear-gradient(180deg, #264966, #12344d);
}
.send-more .ico {
    color: #fff;
}

/* properties column */
.props {
    width: 313px;
    flex: none;
    display: flex;
    background-color: #fff;
    box-shadow: inset 6px 0 6px -6px rgba(18, 52, 77, .08);
}
.props-main {
    width: 293px;
    padding: 0 0 0 20px;
    display: flex;
    flex-direction: column;
}
.props-main > .select, .tags, .props-main > .props-status, .props-main > .props-since {
    width: 254px;
}
.props-status {
    margin-top: 29px;
    line-height: 32px;
    font-size: 21.500px;
}
.props-since {
    height: 52px;
    margin-top: 8px;
    line-height: 24px;
    font-size: 16.500px;
    color: #475867;
    border-bottom: 1px solid #ebeff3;
}
.props-title {
    margin-top: 20px;
    line-height: 20px;
    font-size: 15px;
    font-weight: 500;
}
.field-label {
    display: block;
    height: 20px;
    line-height: 20px;
    margin: 22px 0 6px;
    font-size: 14.500px;
    font-weight: 500;
    color: #475867;
}
.label-tags {
    margin: 27px 0 6px;
}
.label-type {
    margin-top: 29px;
}
.label-status {
    margin-top: 25px;
}
.label-product {
    margin-top: 26px;
}
.label-ref {
    margin: 21px 0 12px;
}
.req {
    margin-left: 3px;
    color: #e43538;
}
.tags {
    height: 123px;
    display: flex;
    flex-wrap: wrap;
    align-content: flex-start;
    gap: 5px;
    padding: 5px 10px;
    border: 1px solid #cfd7df;
    border-radius: 4px;
}
.tag {
    height: 37px;
    display: flex;
    align-items: center;
    padding: 0 11px 3px 10px;
    font-size: 14.700px;
    font-weight: 500;
    border-radius: 4px;
    background-color: #ebeff3;
}
.tag i {
    margin: 6px 0 0 17px;
    font-style: normal;
    font-size: 18px;
    font-weight: 400;
    color: #475867;
}
.select {
    height: 40px;
    flex: none;
    display: flex;
    align-items: center;
    justify-content: space-between;
    padding: 0 13px 2px 15px;
    font-size: 17px;
    font-weight: 500;
    border: 1px solid #cfd7df;
    border-radius: 4px;
    background-color: #fff;
}
.select .ico {
    stroke-width: 2.400;
    color: #12344d;
}
.select-tight {
    height: 39px;
    margin-top: -1px;
}
.prio {
    display: flex;
    align-items: center;
    gap: 5px;
}
.prio i {
    width: 10px;
    height: 10px;
    margin-top: 2px;
    border-radius: 2px;
    background-color: #4d9df8;
}
.agent-block {
    width: 254px;
    margin-top: 24px;
    padding: 1px 0 0 13px;
    border-left: 1px solid #cfd7df;
}
.agent-block .field-label {
    margin: 3px 0 6px;
}
.select-empty {
    color: #c1ccd6;
    font-weight: 400;
}
.add-agent {
    margin: 9px 0 0 16px;
    line-height: 20px;
    font-size: 17.500px;
}
.update-btn {
    width: 255px;
    height: 42px;
    margin: auto 0 106px 10px;
    line-height: 42px;
    text-align: center;
    font-size: 17px;
    font-weight: 600;
    color: #fff;
    border-radius: 4px;
    background: linear-gradient(180deg, #94a6b4, #8b9dab);
}
.props-scroll {
    width: 20px;
    display: flex;
    flex-direction: column;
    align-items: center;
    padding: 7px 0 172px;
    background-color: #fcfcfc;
}

/* widgets on the right */
.side {
    flex: 1;
    display: flex;
}
.panels {
    width: 314px;
    height: 654px;
    flex: none;
    margin: 14px 0 0 8px;
    display: flex;
    flex-direction: column;
    gap: 7px;
    overflow: hidden;
}
.panel {
    flex: none;
    border: 1px solid #cfd7df;
    border-radius: 12px;
    background-color: #fff;
    overflow: hidden;
}
.panel-head {
    height: 51px;
    display: flex;
    align-items: center;
    gap: 7px;
    padding: 0 17px 0 15px;
    font-size: 15px;
    font-weight: 500;
    background-color: #f5f7f9;
}
.panel-head > .ico:first-child {
    width: 22px;
}
.italic-i {
    width: 22px;
    text-align: center;
    font-family: "Liberation Serif", serif;
    font-size: 24px;
    font-weight: 700;
    font-style: italic;
    line-height: 24px;
}
.chev-up {
    margin-left: auto;
    margin-top: -5px;
    transform: rotate(180deg);
}
.chev-down {
    transform: none;
}
.panel-contact {
    height: 231px;
}
.contact-body {
    padding: 15px 13px 0;
}
.contact-row {
    position: relative;
    display: flex;
    align-items: center;
}
.avatar-lg {
    width: 50px;
    height: 50px;
    font-size: 18px;
    font-weight: 400;
}
.contact-name {
    margin-left: 9px;
    font-size: 19px;
    font-weight: 700;
}
.v-rule-xs {
    height: 20px;
    margin: 0 6px 0 7px;
}
.edit {
    position: absolute;
    right: 0;
    top: 5px;
    font-size: 14px;
    font-weight: 500;
}
.email-label {
    margin-top: 21px;
    line-height: 24px;
    font-size: 16.500px;
    color: #6f7c87;
}
.email-row {
    display: flex;
    align-items: center;
    gap: 25px;
    margin-top: 2px;
    line-height: 24px;
    font-size: 17px;
    font-weight: 500;
}
.panel-timeline {
    height: 236px;
}
.timeline {
    display: flex;
    padding: 12px 13px 0;
}
.tl-rail {
    width: 37px;
    flex: none;
    display: flex;
    flex-direction: column;
    align-items: center;
}
.tl-dot {
    width: 37px;
    height: 41px;
    display: flex;
    align-items: center;
    justify-content: center;
    border-radius: 50%;
    background-color: #ebeff3;
}
.tl-line {
    width: 1px;
    height: 99px;
    background-color: #dfe5ea;
}
.tl-text {
    margin-left: 9px;
}
.tl-title {
    line-height: 27px;
    font-size: 17.100px;
    font-weight: 500;
}
.tl-num {
    margin-top: 4px;
    line-height: 24px;
    font-size: 16px;
    color: #475867;
}
.tl-date {
    margin-top: 9px;
    line-height: 24px;
    font-size: 14.500px;
    color: #475867;
}
.tl-status {
    line-height: 24px;
    font-size: 14px;
    color: #475867;
}
.panel-closed {
    height: 54px;
}
.panel-closed .panel-head {
    background: linear-gradient(180deg, #fff, #f3f5f7);
}
.panel-closed:last-child {
    height: 60px;
}
.rail {
    flex: 1;
    height: 380px;
    margin: 25px 0 0 3px;
    display: flex;
    flex-direction: column;
    align-items: center;
    gap: 40.800px;
}
.rail > * {
    height: 24px;
}
.tile-blue {
    stroke: #2c5cc5;
}

/* toast and floating launchers sit over the page */
.toast {
    position: absolute;
    top: 20px;
    left: 710px;
    width: 500px;
    height: 59px;
    display: flex;
    align-items: center;
    padding: 0 24px 0 19px;
    font-size: 17px;
    font-weight: 500;
    border-top: 5px solid #00795b;
    border-radius: 4px;
    background-color: #fff;
    box-shadow: 0 8px 24px rgba(18, 52, 77, .14);
}
.toast-check {
    color: #00795b;
    margin-right: 18px;
}
.toast-close {
    margin-left: auto;
    font-size: 20px;
    font-weight: 700;
    color: #111;
}
.bubble {
    position: absolute;
    left: 1828px;
    width: 70px;
    height: 70px;
    display: flex;
    align-items: center;
    justify-content: center;
    border-radius: 35px 12px 35px 35px;
    background-color: #00b5b2;
    box-shadow: 0 4px 8px rgba(18, 52, 77, .3);
}
.bubble-one { top: 774px; }
.bubble-two { top: 1392px; }
.bubble-three { top: 1751px; }
.bubble-net {
    width: 38px;
    height: 38px;
    margin-top: 8px;
    color: #fff;
    stroke-width: 2;
}
.bubble-badge {
    position: absolute;
    top: -9px;
    left: -9px;
    width: 40px;
    height: 33px;
    line-height: 31px;
    text-align: center;
    font-size: 15px;
    font-weight: 700;
    color: #fff;
    border: 1px solid #fff;
    border-radius: 17px;
    background-color: #e03c28;
}
```
